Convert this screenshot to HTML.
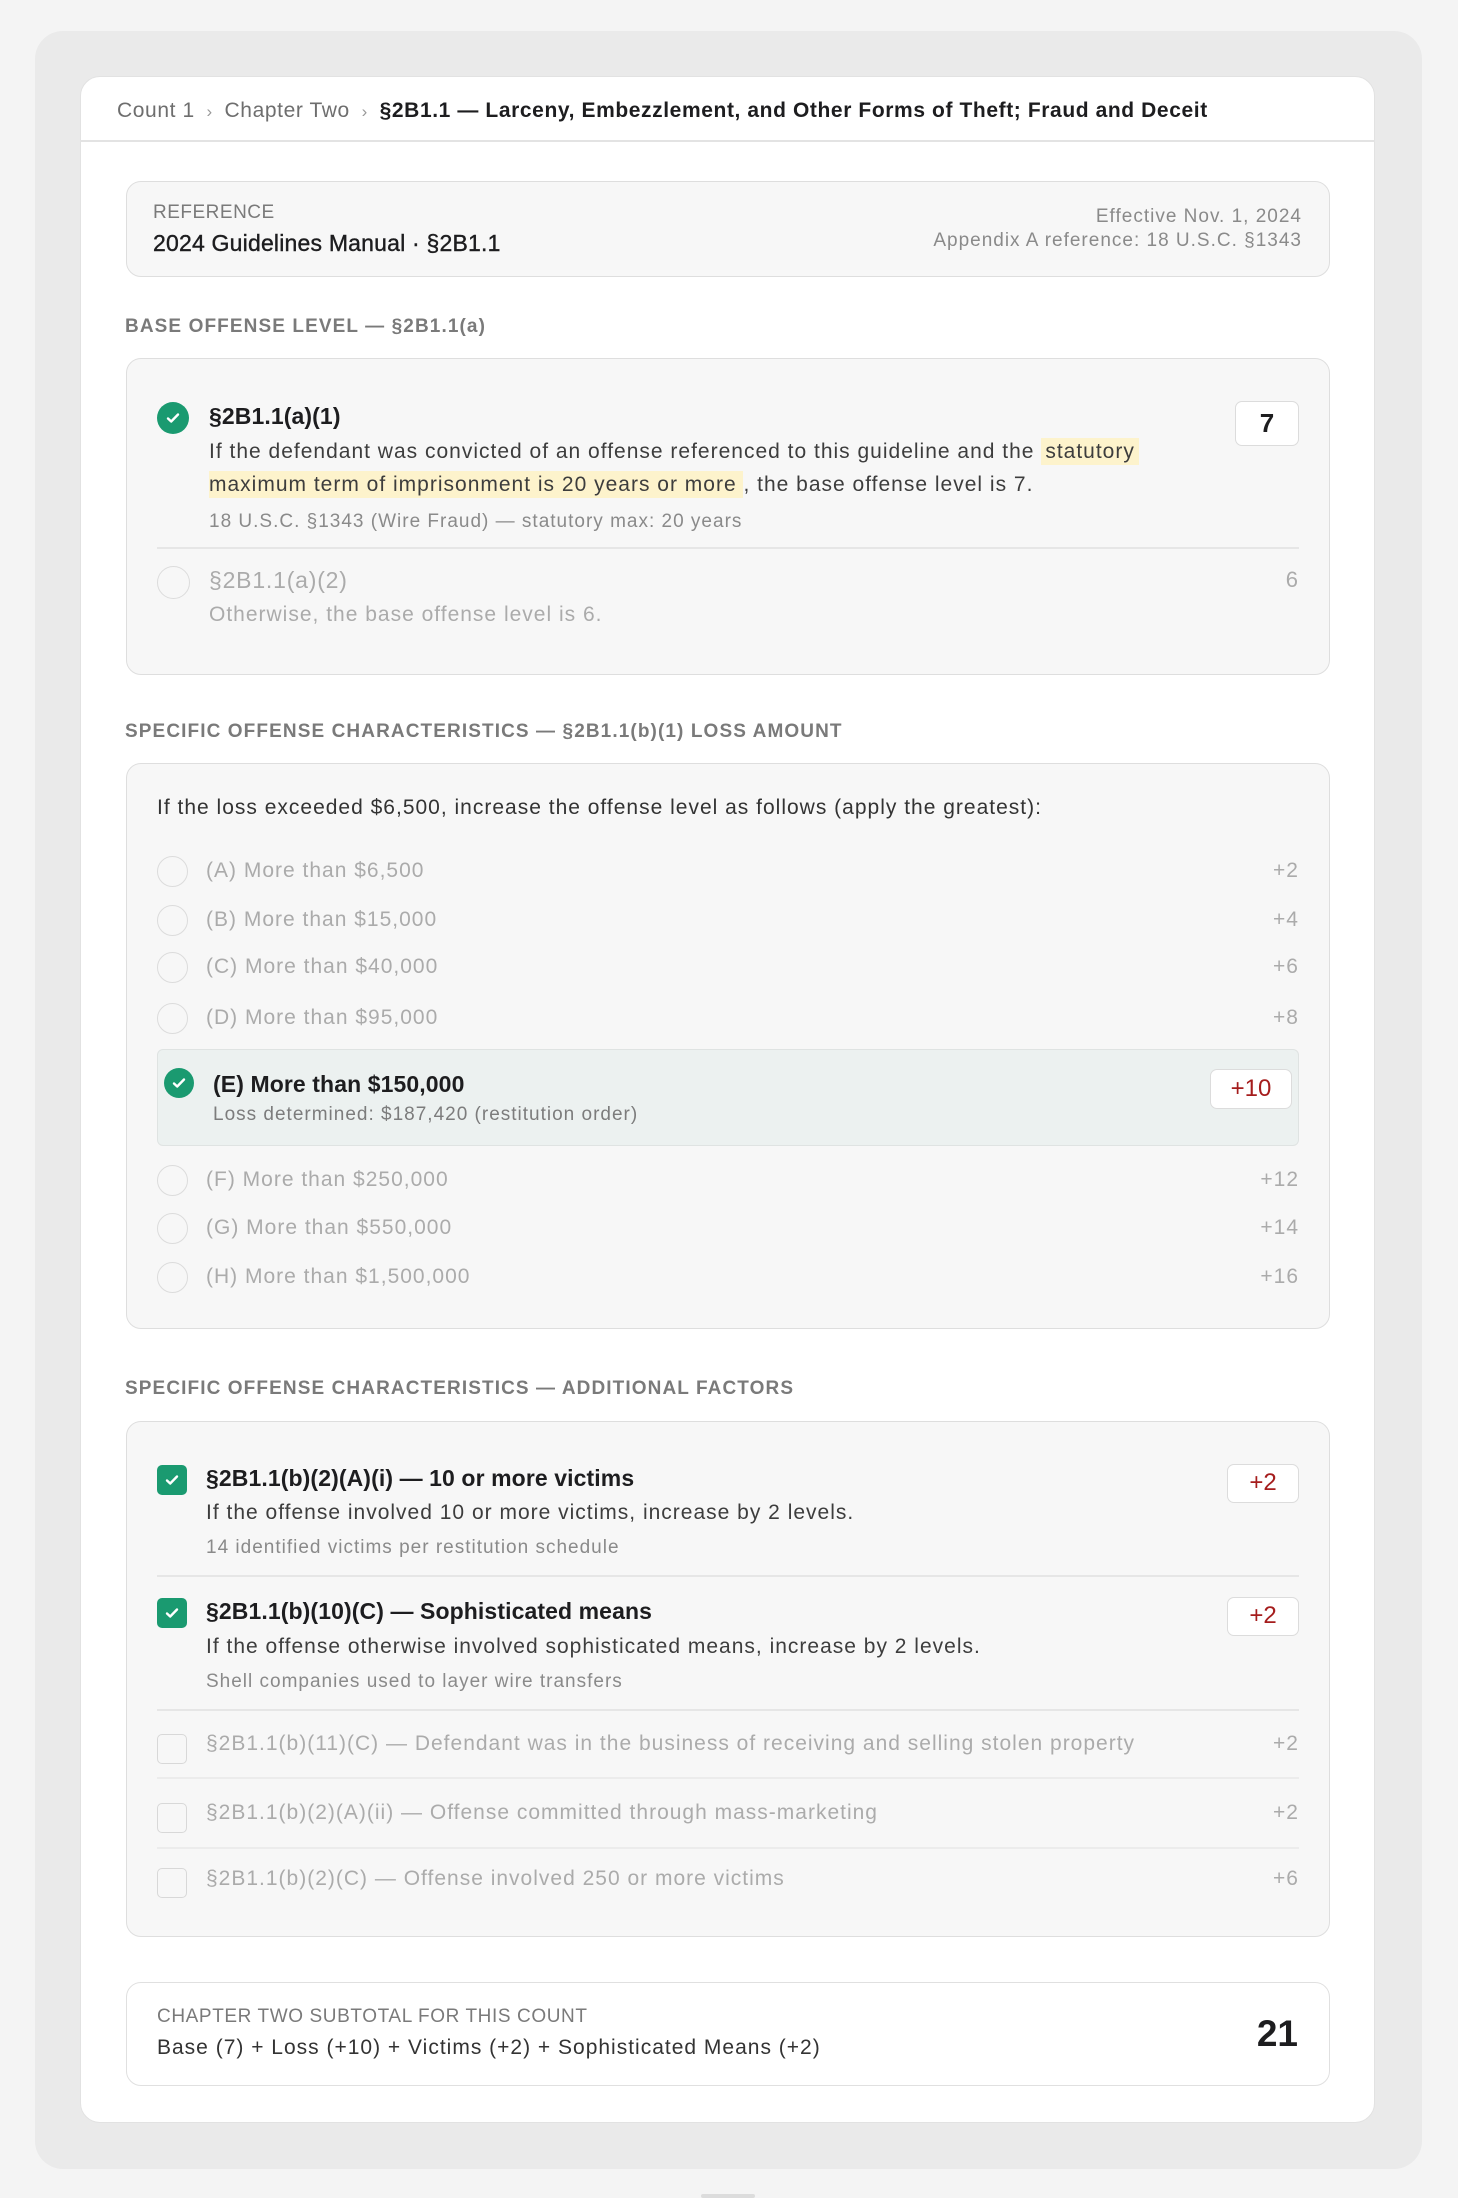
<!DOCTYPE html>
<html><head><meta charset="utf-8"><style>
*{box-sizing:border-box;margin:0;padding:0}
body{width:1458px;height:2198px;background:#f4f4f4;font-family:"Liberation Sans",Helvetica,Arial,sans-serif;position:relative;overflow:hidden;color:#1d1d1f;letter-spacing:1px}
.a{position:absolute;white-space:nowrap}
.panel{left:35px;top:31px;width:1387px;height:2138px;background:#eaeaea;border-radius:28px}
.card{left:80px;top:76px;width:1295px;height:2047px;background:#fff;border-radius:20px;border:1px solid #e2e2e2}
.box{position:absolute;background:#f7f7f7;border:1.5px solid #dedede;border-radius:15px}
.lbl{font-size:19px;color:#7a7a7a;letter-spacing:1.1px;line-height:24px;font-weight:bold}
.t{line-height:30px}
.b{font-weight:bold;letter-spacing:0.1px}
.radio{position:absolute;width:31px;height:31px;border-radius:50%;border:1.5px solid #dcdcdc;background:#f7f7f7}
.chk{position:absolute;width:32px;height:32px;border-radius:50%;background:#1a9a70}
.sq{position:absolute;width:30px;height:30px;border-radius:5px;border:1.5px solid #d8d8d8;background:#f7f7f7}
.sqc{position:absolute;width:30px;height:30px;border-radius:5px;background:#1a9a70}
.chk svg,.sqc svg{position:absolute;left:50%;top:50%;transform:translate(-50%,-50%)}
.val{position:absolute;background:#fff;border:1.5px solid #dcdcdc;border-radius:7px;text-align:center;font-size:26px;letter-spacing:0}
.red{color:#a51d1d}
.dim{color:#ababab}
.hr{position:absolute;height:2px;background:#e6e6e6}
</style></head><body>
<div class="a panel"></div>
<div class="a card"></div>
<div class="a" style="left:80px;top:140px;width:1295px;height:2px;background:#e3e3e3"></div>
<div class="a" style="left:117px;top:97px;font-size:21px;line-height:28px;color:#6e6e6e;letter-spacing:0.6px">Count 1 <span style="color:#999;font-size:17px">&nbsp;›&nbsp;</span> Chapter Two <span style="color:#999;font-size:17px">&nbsp;›&nbsp;</span> <span style="color:#1d1d1f;font-weight:bold">§2B1.1 — Larceny, Embezzlement, and Other Forms of Theft; Fraud and Deceit</span></div>

<div class="box" style="left:126px;top:181px;width:1204px;height:96px"></div>
<div class="a" style="left:153px;top:201px;font-size:19px;line-height:24px;color:#7a7a7a;letter-spacing:0.5px">REFERENCE</div>
<div class="a" style="left:153px;top:229px;font-size:23px;line-height:28px;letter-spacing:0.2px;-webkit-text-stroke:0.4px #1d1d1f">2024 Guidelines Manual · §2B1.1</div>
<div class="a" style="right:156px;top:205px;font-size:19px;line-height:24px;color:#8a8a8a;text-align:right">Effective Nov. 1, 2024<br>Appendix A reference: 18 U.S.C. §1343</div>

<div class="a lbl" style="left:125px;top:315px">BASE OFFENSE LEVEL — §2B1.1(a)</div>
<div class="box" style="left:126px;top:358px;width:1204px;height:317px"></div>
<div class="chk" style="left:157px;top:402px"><svg width="14" height="12" viewBox="0 0 14 12"><path d="M2 6.5l3.2 3L12 2.5" stroke="#fff" stroke-width="2.4" fill="none" stroke-linecap="round" stroke-linejoin="round"/></svg></div>
<div class="a t b" style="left:209px;top:401px;font-size:23px">§2B1.1(a)(1)</div>
<div class="a" style="left:209px;top:435px;font-size:21px;line-height:33px;color:#3d3d3d">If the defendant was convicted of an offense referenced to this guideline and the <span style="background:#fdf3cc;padding:2px 4px">statutory</span><br><span style="background:#fdf3cc;padding:2px 0">maximum term of imprisonment is 20 years or more </span>, the base offense level is 7.</div>
<div class="a" style="left:209px;top:510px;font-size:19px;line-height:24px;color:#8a8a8a">18 U.S.C. §1343 (Wire Fraud) — statutory max: 20 years</div>
<div class="val" style="left:1235px;top:401px;width:64px;height:45px;line-height:42px;font-weight:bold">7</div>
<div class="hr" style="left:157px;top:547px;width:1142px"></div>
<div class="radio" style="left:157px;top:566px;width:33px;height:33px"></div>
<div class="a t dim" style="left:209px;top:565px;font-size:23px;letter-spacing:0.8px">§2B1.1(a)(2)</div>
<div class="a t dim" style="left:209px;top:600px;font-size:21px">Otherwise, the base offense level is 6.</div>
<div class="a t dim" style="right:159px;top:565px;font-size:22px">6</div>

<div class="a lbl" style="left:125px;top:720px">SPECIFIC OFFENSE CHARACTERISTICS — §2B1.1(b)(1) LOSS AMOUNT</div>
<div class="box" style="left:126px;top:763px;width:1204px;height:566px"></div>
<div class="a t" style="left:157px;top:793px;font-size:21px;color:#333">If the loss exceeded $6,500, increase the offense level as follows (apply the greatest):</div>

<div class="radio" style="left:157px;top:856px"></div><div class="a t dim" style="left:206px;top:856px;font-size:21px">(A) More than $6,500</div><div class="a t dim" style="right:159px;top:856px;font-size:21px">+2</div>
<div class="radio" style="left:157px;top:905px"></div><div class="a t dim" style="left:206px;top:905px;font-size:21px">(B) More than $15,000</div><div class="a t dim" style="right:159px;top:905px;font-size:21px">+4</div>
<div class="radio" style="left:157px;top:952px"></div><div class="a t dim" style="left:206px;top:952px;font-size:21px">(C) More than $40,000</div><div class="a t dim" style="right:159px;top:952px;font-size:21px">+6</div>
<div class="radio" style="left:157px;top:1003px"></div><div class="a t dim" style="left:206px;top:1003px;font-size:21px">(D) More than $95,000</div><div class="a t dim" style="right:159px;top:1003px;font-size:21px">+8</div>

<div class="a" style="left:157px;top:1049px;width:1142px;height:97px;background:#ecf1f0;border:1.5px solid #dfe3e2;border-radius:6px"></div>
<div class="chk" style="left:164px;top:1068px;width:30px;height:30px"><svg width="14" height="12" viewBox="0 0 14 12"><path d="M2 6.5l3.2 3L12 2.5" stroke="#fff" stroke-width="2.4" fill="none" stroke-linecap="round" stroke-linejoin="round"/></svg></div>
<div class="a t b" style="left:213px;top:1069px;font-size:23px">(E) More than $150,000</div>
<div class="a t" style="left:213px;top:1100px;font-size:19px;color:#7c7c7c">Loss determined: $187,420 (restitution order)</div>
<div class="val red" style="left:1210px;top:1069px;width:82px;height:40px;line-height:37px;font-size:24px">+10</div>

<div class="radio" style="left:157px;top:1165px"></div><div class="a t dim" style="left:206px;top:1165px;font-size:21px">(F) More than $250,000</div><div class="a t dim" style="right:159px;top:1165px;font-size:21px">+12</div>
<div class="radio" style="left:157px;top:1213px"></div><div class="a t dim" style="left:206px;top:1213px;font-size:21px">(G) More than $550,000</div><div class="a t dim" style="right:159px;top:1213px;font-size:21px">+14</div>
<div class="radio" style="left:157px;top:1262px"></div><div class="a t dim" style="left:206px;top:1262px;font-size:21px">(H) More than $1,500,000</div><div class="a t dim" style="right:159px;top:1262px;font-size:21px">+16</div>

<div class="a lbl" style="left:125px;top:1377px">SPECIFIC OFFENSE CHARACTERISTICS — ADDITIONAL FACTORS</div>
<div class="box" style="left:126px;top:1421px;width:1204px;height:516px"></div>
<div class="sqc" style="left:157px;top:1465px"><svg width="14" height="12" viewBox="0 0 14 12"><path d="M2 6.5l3.2 3L12 2.5" stroke="#fff" stroke-width="2.4" fill="none" stroke-linecap="round" stroke-linejoin="round"/></svg></div>
<div class="a t b" style="left:206px;top:1463px;font-size:23px">§2B1.1(b)(2)(A)(i) — 10 or more victims</div>
<div class="a t" style="left:206px;top:1498px;font-size:21px;color:#3d3d3d">If the offense involved 10 or more victims, increase by 2 levels.</div>
<div class="a t" style="left:206px;top:1533px;font-size:19px;color:#8a8a8a">14 identified victims per restitution schedule</div>
<div class="val red" style="left:1227px;top:1464px;width:72px;height:39px;line-height:36px;font-size:24px">+2</div>
<div class="hr" style="left:157px;top:1575px;width:1142px"></div>

<div class="sqc" style="left:157px;top:1598px"><svg width="14" height="12" viewBox="0 0 14 12"><path d="M2 6.5l3.2 3L12 2.5" stroke="#fff" stroke-width="2.4" fill="none" stroke-linecap="round" stroke-linejoin="round"/></svg></div>
<div class="a t b" style="left:206px;top:1596px;font-size:23px">§2B1.1(b)(10)(C) — Sophisticated means</div>
<div class="a t" style="left:206px;top:1632px;font-size:21px;color:#3d3d3d">If the offense otherwise involved sophisticated means, increase by 2 levels.</div>
<div class="a t" style="left:206px;top:1667px;font-size:19px;color:#8a8a8a">Shell companies used to layer wire transfers</div>
<div class="val red" style="left:1227px;top:1597px;width:72px;height:39px;line-height:36px;font-size:24px">+2</div>
<div class="hr" style="left:157px;top:1709px;width:1142px"></div>

<div class="sq" style="left:157px;top:1734px"></div><div class="a t dim" style="left:206px;top:1729px;font-size:21px">§2B1.1(b)(11)(C) — Defendant was in the business of receiving and selling stolen property</div><div class="a t dim" style="right:159px;top:1729px;font-size:21px">+2</div>
<div class="hr" style="left:157px;top:1777px;width:1142px;background:#ececec"></div>
<div class="sq" style="left:157px;top:1803px"></div><div class="a t dim" style="left:206px;top:1798px;font-size:21px">§2B1.1(b)(2)(A)(ii) — Offense committed through mass-marketing</div><div class="a t dim" style="right:159px;top:1798px;font-size:21px">+2</div>
<div class="hr" style="left:157px;top:1847px;width:1142px;background:#ececec"></div>
<div class="sq" style="left:157px;top:1868px"></div><div class="a t dim" style="left:206px;top:1864px;font-size:21px">§2B1.1(b)(2)(C) — Offense involved 250 or more victims</div><div class="a t dim" style="right:159px;top:1864px;font-size:21px">+6</div>

<div class="a" style="left:126px;top:1982px;width:1204px;height:104px;background:#fff;border:1.5px solid #e0e0e0;border-radius:15px"></div>
<div class="a" style="left:157px;top:2005px;font-size:19px;line-height:24px;color:#7a7a7a;letter-spacing:0.6px">CHAPTER TWO SUBTOTAL FOR THIS COUNT</div>
<div class="a t" style="left:157px;top:2033px;font-size:21px;color:#333">Base (7) + Loss (+10) + Victims (+2) + Sophisticated Means (+2)</div>
<div class="a" style="right:160px;top:2013px;font-size:37px;line-height:42px;font-weight:bold;letter-spacing:0">21</div>
<div class="a" style="left:701px;top:2194px;width:54px;height:4px;background:#dcdcdc;border-radius:2px"></div>
</body></html>
